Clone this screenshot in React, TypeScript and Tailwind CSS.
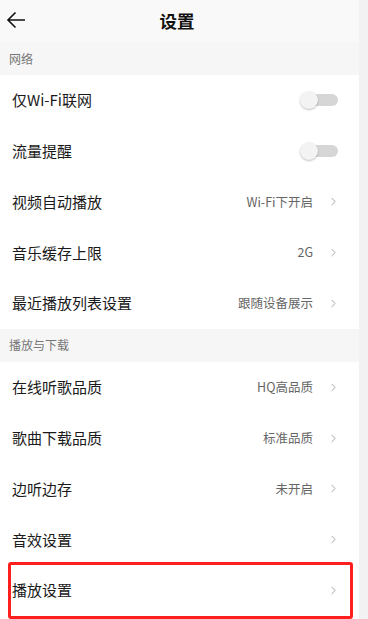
import { ChevronRight } from "lucide-react";

const font = { fontFamily: '"Noto Sans CJK SC", "Noto Sans", sans-serif' };

type Row = { label: string; value?: string; toggle?: boolean; mark?: boolean };

const network: Row[] = [
  { label: "仅Wi-Fi联网", toggle: true },
  { label: "流量提醒", toggle: true },
  { label: "视频自动播放", value: "Wi-Fi下开启" },
  { label: "音乐缓存上限", value: "2G" },
  { label: "最近播放列表设置", value: "跟随设备展示" },
];

const play: Row[] = [
  { label: "在线听歌品质", value: "HQ高品质" },
  { label: "歌曲下载品质", value: "标准品质" },
  { label: "边听边存", value: "未开启" },
  { label: "音效设置" },
  { label: "播放设置", mark: true },
];

const Toggle = () => (
  <div className="relative w-[38px] h-[18px] flex items-center mr-[21px]">
    <div className="absolute right-0 w-[32px] h-[12px] rounded-full bg-[#d6d6d6]" />
    <div className="absolute left-0 w-[18px] h-[18px] rounded-full bg-[#f3f3f3] shadow-[0_1px_2px_rgba(0,0,0,0.25)]" />
  </div>
);

const SettingRow = ({ row }: { row: Row }) => (
  <div className="relative h-[50.8px] flex items-center bg-white pl-3">
    <span className="flex-1 text-[15px] text-[#1a1a1a]">{row.label}</span>
    {row.toggle ? (
      <Toggle />
    ) : (
      <div className="flex items-center">
        {row.value && (
          <span className="text-[12.5px] text-[#666] mr-[14px]">{row.value}</span>
        )}
        <ChevronRight className="w-[13px] h-[13px] text-[#999] mr-[19px]" strokeWidth={1.6} />
      </div>
    )}
    {row.mark && (
      <div className="absolute left-[8px] right-[6px] -top-[3px] -bottom-[3px] border-[3px] border-[#ff1f1f] rounded-[3px]" />
    )}
  </div>
);

const SectionTitle = ({ title }: { title: string }) => (
  <div className="h-[33px] flex items-center pl-[9px] bg-[#f6f6f6] text-[12px] text-[#777]">
    {title}
  </div>
);

export default function App() {
  return (
    <div className="w-[368px] h-[619px] overflow-hidden flex bg-[#f2f2f2]" style={font}>
      <div className="w-[359px] flex flex-col bg-white">
        <div className="h-[42px] relative flex items-center justify-center pr-[5px] bg-[#f9f9f9]">
          <svg
            className="absolute left-[6px] top-[10px]"
            width="20"
            height="20"
            viewBox="0 0 20 20"
            fill="none"
            stroke="#111"
            strokeWidth="1.6"
          >
            <path d="M19 10H2M9.5 2.5L2 10l7.5 7.5" />
          </svg>
          <span className="text-[17.5px] font-bold text-[#111]">设置</span>
        </div>
        <SectionTitle title="网络" />
        {network.map((r) => (
          <SettingRow key={r.label} row={r} />
        ))}
        <SectionTitle title="播放与下载" />
        {play.map((r) => (
          <SettingRow key={r.label} row={r} />
        ))}
      </div>
    </div>
  );
}
